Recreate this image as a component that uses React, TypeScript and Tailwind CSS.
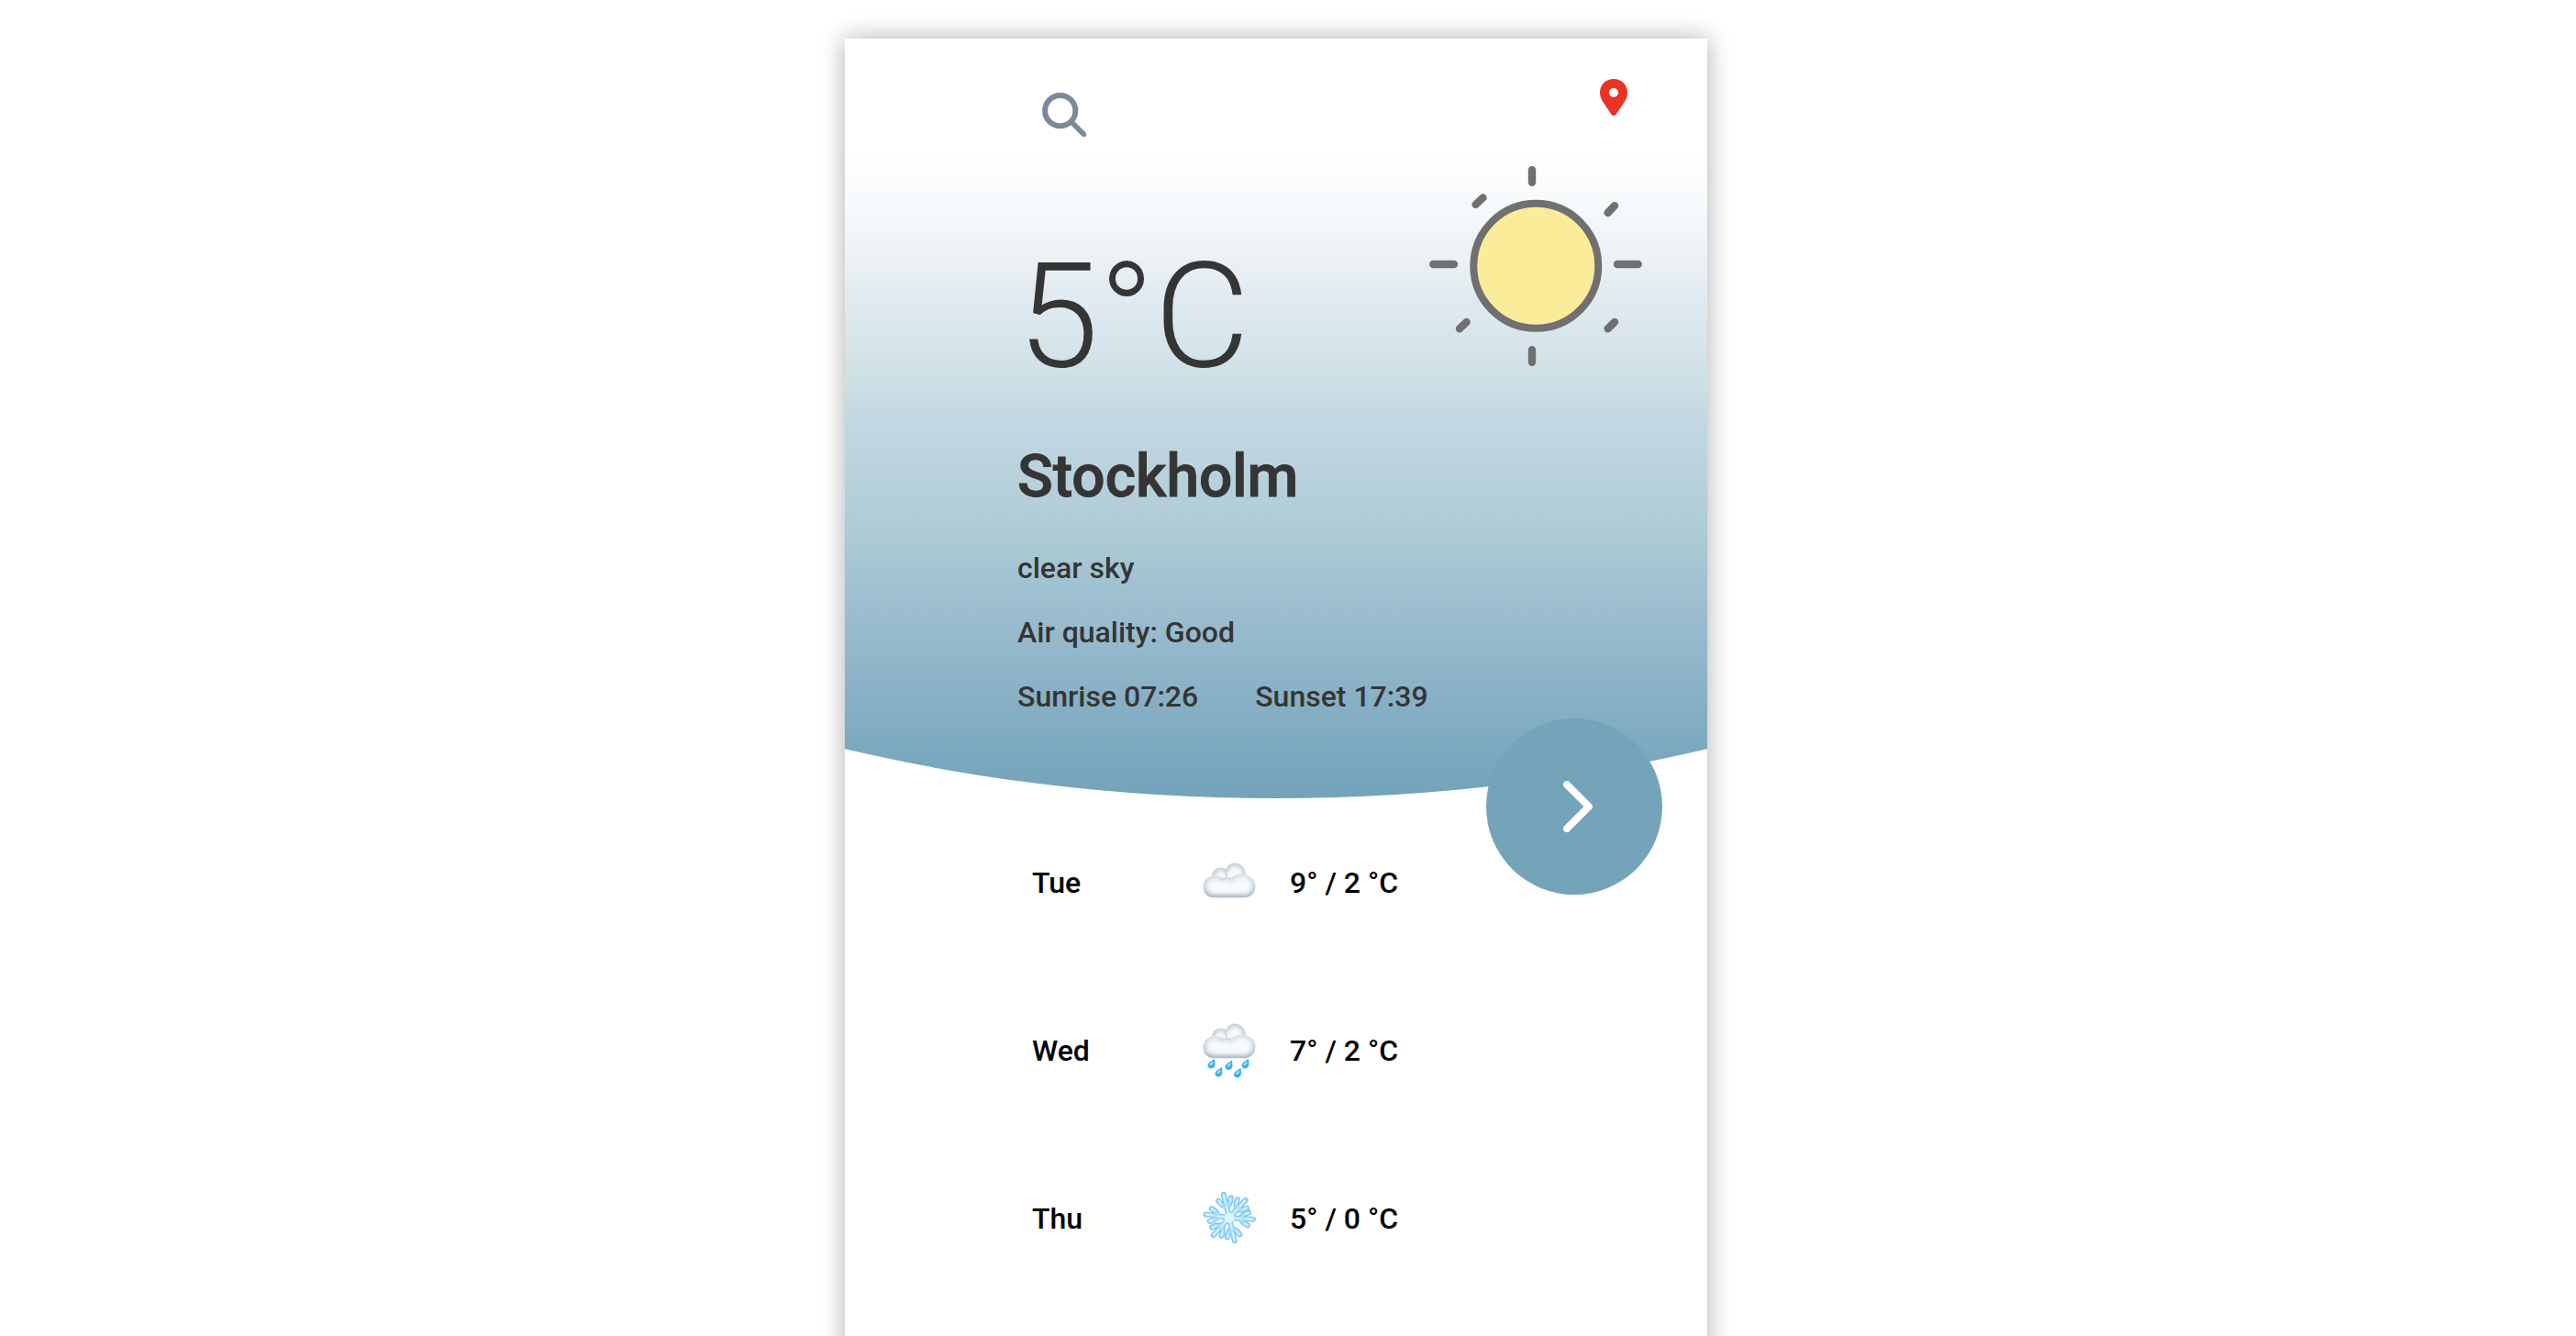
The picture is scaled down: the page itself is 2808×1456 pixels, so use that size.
import React from "react";

type Condition = "cloud" | "rain" | "snow";

const forecast: { day: string; condition: Condition; label: string; temps: string }[] = [
  { day: "Tue", condition: "cloud", label: "Cloudy", temps: "9° / 2 °C" },
  { day: "Wed", condition: "rain", label: "Rain", temps: "7° / 2 °C" },
  { day: "Thu", condition: "snow", label: "Snow", temps: "5° / 0 °C" },
];

function SearchIcon() {
  return (
    <svg className="block size-12" viewBox="0 0 48 48" fill="none" stroke="#7b8999" strokeLinecap="round" aria-hidden="true">
      <circle cx="19.7" cy="19.7" r="16.6" strokeWidth="6" />
      <path d="M32 32 45.5 45.5" strokeWidth="5.6" />
    </svg>
  );
}

function PinIcon() {
  return (
    <svg className="block h-10 w-8" viewBox="0 0 32 40" aria-hidden="true">
      <path
        fill="#ea3323"
        fillRule="evenodd"
        d="M16 0C7.4 0 1 6.6 1 14.8c0 4.1 1.5 7.4 3.6 10.7l8.9 13.2c1.3 1.7 3.7 1.7 5 0l8.9-13.2C29.5 22.2 31 18.9 31 14.8 31 6.6 24.6 0 16 0Zm0 10a5 5 0 1 1 0 10 5 5 0 0 1 0-10Z"
      />
    </svg>
  );
}

function SunIcon() {
  return (
    <svg className="block h-[218px] w-[232px] shrink-0" viewBox="0 0 232 218" role="img" aria-label="Sunny">
      <circle cx="116.3" cy="108.8" r="68" fill="#fbec9a" stroke="#707070" strokeWidth="8" />
      <g stroke="#707070" strokeWidth="8.4" strokeLinecap="round">
        <path d="M112 4.3V17.7M112 200.3V213.7M4.3 107H27M205 107H227.7" />
        <path d="M50.5 42 58.5 34.5M194.6 51 202 43.2M33 177.3 40.6 170M194.6 177.3 202 170" />
      </g>
    </svg>
  );
}

const cloudBack =
  "M19.5 5.5C22 5.5 24 6.3 25.5 7.5 27 3 30.5 .5 35 .5 41.5 .5 46.5 5.5 47 12.5L47 22H10V15C10 9.5 14 5.5 19.5 5.5Z";
const cloudFront =
  "M12.5 38.3C5.3 38.3 .5 33.3 .5 26.5 .5 19.3 6 14 13 14 16 14 18.3 15 20.3 16.6 24.5 15.3 28 15.5 31.5 17.2 34.5 13.8 38.5 12.3 43 12.6 51.5 13 57.5 18.5 57.5 26 57.5 33 52.5 38.3 45.5 38.3Z";

function CloudShape({ id }: { id: string }) {
  return (
    <g>
      <defs>
        <clipPath id={`${id}-back`}>
          <path d={cloudBack} />
        </clipPath>
        <clipPath id={`${id}-front`}>
          <path d={cloudFront} />
        </clipPath>
        <filter id={`${id}-soft`} x="-20%" y="-20%" width="140%" height="140%">
          <feGaussianBlur stdDeviation="2.6" />
        </filter>
        <linearGradient id={`${id}-shade`} x1="0" x2="0" y1="0" y2="1">
          <stop offset="0" stopColor="#d6dde4" />
          <stop offset="0.6" stopColor="#bcc8d4" />
          <stop offset="1" stopColor="#98a9ba" />
        </linearGradient>
      </defs>
      <g clipPath={`url(#${id}-back)`}>
        <path d={cloudBack} fill="#f7f9fa" />
        <path d="M25.5 7.5C24.5 10 25 13 26.5 15" fill="none" stroke="#c9d3dc" strokeWidth="1.6" />
        <path d={cloudBack} fill="none" stroke="#b8c5d1" strokeWidth="5" filter={`url(#${id}-soft)`} />
      </g>
      <g clipPath={`url(#${id}-front)`}>
        <path d={cloudFront} fill="#f8fafb" />
        <path d={cloudFront} fill="none" stroke={`url(#${id}-shade)`} strokeWidth="6" filter={`url(#${id}-soft)`} />
      </g>
      <path d="M20 19.3C23 16.8 28 16.5 30.5 18.5" fill="none" stroke="#d0d8e0" strokeWidth="1.4" strokeLinecap="round" />
    </g>
  );
}

function Drop({ x, y }: { x: number; y: number }) {
  return (
    <g transform={`translate(${x} ${y})`}>
      <path d="M7.5 0C3 3.2 0 4.6 0 7.3c0 4.2 7 4.2 7.8-.3C8.2 5 7.8 2.6 7.5 0Z" fill="#38b0f2" />
      <path d="M6.2 2.5C3.5 4.6 2 5 2 7 4.3 7.4 6.2 5.5 6.2 2.5Z" fill="#b5e8fc" />
    </g>
  );
}

const drops = [
  { x: 5.5, y: 39 },
  { x: 24.5, y: 40.5 },
  { x: 42.5, y: 39 },
  { x: 13.5, y: 48 },
  { x: 34, y: 49 },
];

function SnowflakeShape() {
  const arms = [-14, 43, 94, 167, 222, 278];
  const arm = "M0 0V-13M0-12.5C3-13.500 5.500-16 7-20.500M0-12.500C-3-13.500-5.500-16-7-20.500M0-13V-26";
  return (
    <g transform="translate(29 29)" fill="none" strokeLinecap="round" strokeLinejoin="round">
      {arms.map((angle) => (
        <path key={angle} d={arm} transform={`rotate(${angle})`} stroke="#6cb8ea" strokeWidth="5.8" />
      ))}
      {arms.map((angle) => (
        <path key={angle} d={arm} transform={`rotate(${angle})`} stroke="#a4defa" strokeWidth="4.2" />
      ))}
      {arms.map((angle) => (
        <path
          key={angle}
          d="M0-4V-13M0-17V-25M5-17 6.600-20.500M-5-17-6.600-20.500"
          transform={`rotate(${angle})`}
          stroke="#e0f7ff"
          strokeWidth="1.5"
        />
      ))}
      <circle r="5.5" fill="#dcf5ff" />
    </g>
  );
}

function ConditionIcon({ condition, label }: { condition: Condition; label: string }) {
  return (
    <svg className="block h-[60px] w-[58px]" viewBox="0 0 58 60" role="img" aria-label={label}>
      {condition === "cloud" && (
        <g transform="translate(0 8)">
          <CloudShape id="cloud" />
        </g>
      )}
      {condition === "rain" && (
        <g>
          <CloudShape id="rain" />
          {drops.map((drop) => (
            <Drop key={drop.x} x={drop.x} y={drop.y} />
          ))}
        </g>
      )}
      {condition === "snow" && <SnowflakeShape />}
    </svg>
  );
}

function CurrentWeather() {
  return (
    <section className="relative text-[#353535]">
      <div className="bg-[linear-gradient(180deg,#ffffff_0%,#ffffff_15%,#f5f9fb_23%,#e8eff2_31%,#e3ebf2_33%,#cbdde4_47%,#c5d9e3_49%,#afccd7_64%,#a5c6d2_69%,#98bacd_78%,#86afc4_88%,#7aa9bf_94%,#73a3ba_100%)] pb-[76px] pl-[20%] [clip-path:ellipse(141%_100%_at_50%_0%)]">
        <div className="flex h-[139px] items-start justify-between pr-[86px] pl-[27px]">
          <button type="button" aria-label="Search city" className="mt-[59px]">
            <SearchIcon />
          </button>
          <button type="button" aria-label="Use my location" className="mt-11">
            <PinIcon />
          </button>
        </div>
        <div className="flex items-start justify-between pr-[71px]">
          <p className="mt-[84px] text-[160px] leading-[160px] font-light">5°C</p>
          <SunIcon />
        </div>
        <h1 className="mt-[55px] text-[64px] leading-[80px] font-medium [-webkit-text-stroke:1px_#353535]">Stockholm</h1>
        <div className="mt-6 text-[32px] leading-[70px] font-medium">
          <p>clear sky</p>
          <p>Air quality: Good</p>
          <div className="flex gap-[62px]">
            <p>Sunrise 07:26</p>
            <p>Sunset 17:39</p>
          </div>
        </div>
      </div>
      <button
        type="button"
        aria-label="Next city"
        className="absolute right-[49px] -bottom-[105px] flex size-48 items-center justify-center rounded-full bg-[#74a4ba]"
      >
        <svg className="ml-2 h-14 w-8" viewBox="0 0 32 56" fill="none" stroke="#fff" strokeWidth="8" strokeLinecap="round" strokeLinejoin="round" aria-hidden="true">
          <path d="M4 4 28 28 4 52" />
        </svg>
      </button>
    </section>
  );
}

function Forecast() {
  return (
    <table className="ml-[204px] text-left text-[32px] leading-10 font-medium text-black">
      <tbody>
        {forecast.map(({ day, condition, label, temps }) => (
          <tr key={day} className="h-[183px]">
            <th scope="row" className="w-[186px] p-0 font-medium">{day}</th>
            <td className="w-[95px] p-0">
              <ConditionIcon condition={condition} label={label} />
            </td>
            <td className="p-0 whitespace-nowrap">{temps}</td>
          </tr>
        ))}
      </tbody>
    </table>
  );
}

export default function App() {
  return (
    <main className="flex min-h-screen flex-col items-center overflow-hidden bg-white pt-[42px] pr-[26px] font-['Roboto',sans-serif]">
      <div className="-mb-10 w-full max-w-[940px] grow bg-white shadow-[0_0_26px_rgba(0,0,0,0.32)]">
        <CurrentWeather />
        <Forecast />
      </div>
    </main>
  );
}
